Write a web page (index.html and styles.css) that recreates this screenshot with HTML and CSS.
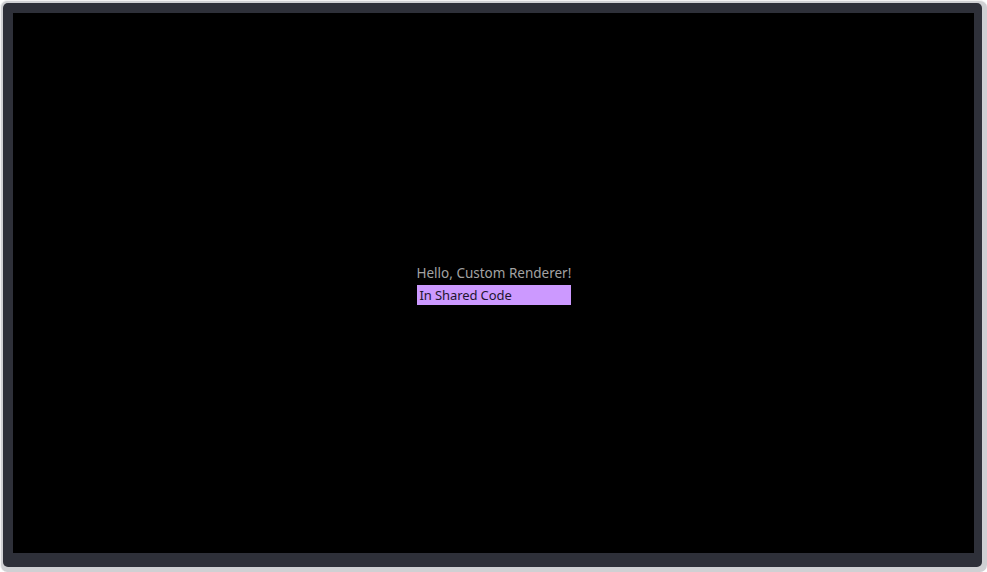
FILE: index.html
```html
<!DOCTYPE html>
<html>
<head>
<meta charset="utf-8">
<link rel="stylesheet" href="styles.css">
</head>
<body>
<div class="bezel">
  <div class="frame">
    <div class="screen">
      <div class="content">
        <div class="hello">Hello, Custom Renderer!</div>
        <div class="shared">In Shared Code</div>
      </div>
    </div>
  </div>
</div>
</body>
</html>
```
FILE: styles.css
```css
html, body {
  margin: 0;
  padding: 0;
  background: #ffffff;
}
.bezel {
  width: 987px;
  height: 572px;
  box-sizing: border-box;
  background: #cfd0d3;
  border-radius: 7px;
  padding: 2px 5px 5px 2px;
  border-top: 1px solid #f2f2f2;
  border-left: 1px solid #f2f2f2;
}
.frame {
  height: 100%;
  box-sizing: border-box;
  background: #2e3039;
  border-radius: 5px;
  padding: 10px 8px 14px 10px;
}
.screen {
  height: 100%;
  background: #000000;
  display: flex;
  align-items: center;
  justify-content: center;
}
.content {
  display: flex;
  flex-direction: column;
  gap: 3px;
  width: 154px;
  margin-top: 4px;
  font-family: "Noto Sans", "Open Sans", sans-serif;
  font-size: 13.5px;
}
.hello {
  color: #a3a3a3;
  line-height: 17px;
  white-space: nowrap;
}
.shared {
  background: #cc99ff;
  color: #1e1530;
  font-size: 13px;
  letter-spacing: -0.1px;
  line-height: 20px;
  height: 20px;
  padding-left: 3px;
  white-space: nowrap;
}
```
